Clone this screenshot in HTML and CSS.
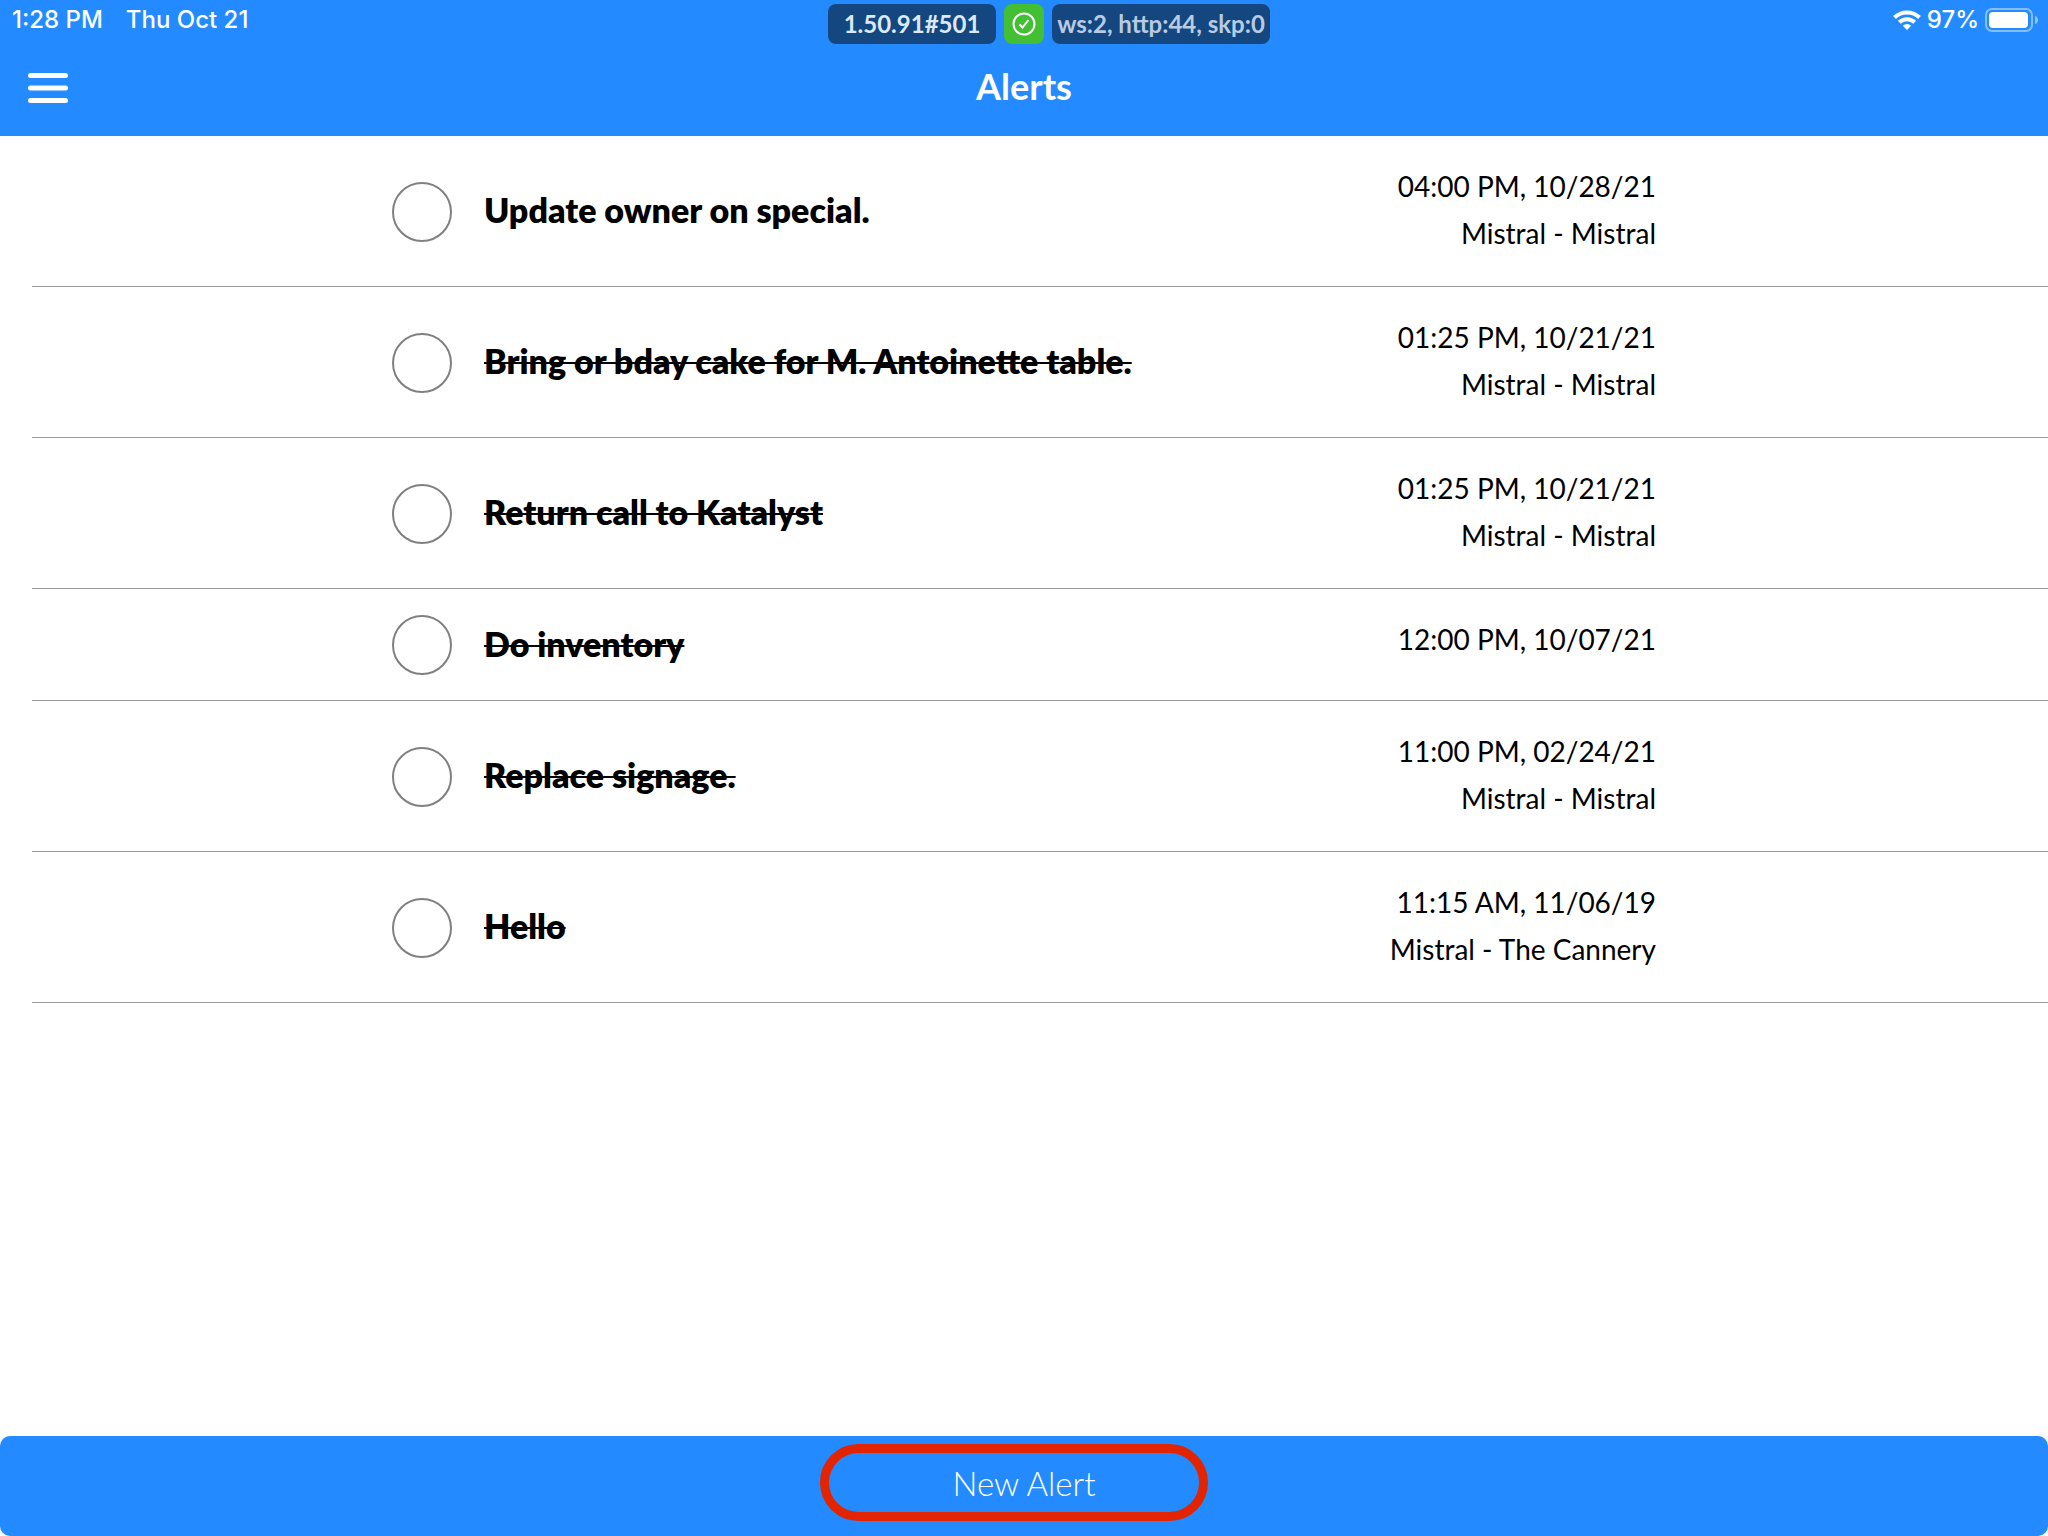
FILE: index.html
```
<!DOCTYPE html>
<html lang="en">
<head>
  <meta charset="UTF-8">
  <meta name="viewport" content="width=device-width, initial-scale=1">
  <title>Alerts</title>
  <link rel="stylesheet" href="styles.css">
</head>
<body>
  <header class="header">
    <div class="status-bar">
      <div class="status-left">
        <span>1:28 PM</span>
        <span>Thu Oct 21</span>
      </div>
      <div class="chips">
        <span class="chip">1.50.91#501</span>
        <span class="chip chip-ok">
          <svg width="24" height="24" viewBox="0 0 24 24" fill="none" stroke="#fff" stroke-width="2">
            <circle cx="12" cy="12" r="10.5"/>
            <path d="M7.5 12.5l3 3 6-7.5"/>
          </svg>
        </span>
        <span class="chip chip-net">ws:2, http:44, skp:0</span>
      </div>
      <div class="status-right">
        <svg width="28" height="22" viewBox="0 0 28 22" fill="none" stroke="#fff" stroke-width="4">
          <path d="M1.5 8.5a18 18 0 0 1 25 0"/>
          <path d="M6.3 13.3a11 11 0 0 1 15.4 0"/>
          <path d="M14 21l-4.2-4.3a6 6 0 0 1 8.4 0z" fill="#fff" stroke="none"/>
        </svg>
        <span>97%</span>
        <svg width="53" height="24" viewBox="0 0 53 24">
          <rect x="1" y="1" width="46" height="22" rx="6" fill="none" stroke="#fff" stroke-opacity=".45" stroke-width="2"/>
          <rect x="4" y="4" width="39" height="16" rx="4" fill="#fff"/>
          <path d="M50 8c4 1 4 7 0 8z" fill="#fff" fill-opacity=".5"/>
        </svg>
      </div>
    </div>
    <div class="nav-bar">
      <button class="menu" type="button" aria-label="Menu">
        <svg width="40" height="30" viewBox="0 0 40 30" stroke="#fff" stroke-width="5" stroke-linecap="round">
          <path d="M2.5 2.5h35M2.5 15h35M2.5 27.5h35"/>
        </svg>
      </button>
      <h1>Alerts</h1>
    </div>
  </header>

  <main>
    <ul class="alerts">
      <li>
        <div class="alert">
          <input type="checkbox" id="a1">
          <label for="a1">Update owner on special.</label>
          <div class="info"><div>04:00 PM, 10/28/21</div><div>Mistral - Mistral</div></div>
        </div>
      </li>
      <li>
        <div class="alert done">
          <input type="checkbox" id="a2">
          <label for="a2">Bring or bday cake for M. Antoinette table.</label>
          <div class="info"><div>01:25 PM, 10/21/21</div><div>Mistral - Mistral</div></div>
        </div>
      </li>
      <li>
        <div class="alert done">
          <input type="checkbox" id="a3">
          <label for="a3">Return call to Katalyst</label>
          <div class="info"><div>01:25 PM, 10/21/21</div><div>Mistral - Mistral</div></div>
        </div>
      </li>
      <li>
        <div class="alert done">
          <input type="checkbox" id="a4">
          <label for="a4">Do inventory</label>
          <div class="info"><div>12:00 PM, 10/07/21</div></div>
        </div>
      </li>
      <li>
        <div class="alert done">
          <input type="checkbox" id="a5">
          <label for="a5">Replace signage.</label>
          <div class="info"><div>11:00 PM, 02/24/21</div><div>Mistral - Mistral</div></div>
        </div>
      </li>
      <li>
        <div class="alert done">
          <input type="checkbox" id="a6">
          <label for="a6">Hello</label>
          <div class="info"><div>11:15 AM, 11/06/19</div><div>Mistral - The Cannery</div></div>
        </div>
      </li>
    </ul>
  </main>

  <button class="new-alert" type="button">New Alert</button>
</body>
</html>
```
FILE: styles.css
```
* {
  box-sizing: border-box;
}
body {
  margin: 0;
  min-height: 100vh;
  display: flex;
  flex-direction: column;
  background: #fff;
  color: #000;
  font-family: "Avenir Next", Lato, "Open Sans", sans-serif;
}
button {
  border: 0;
  padding: 0;
  background: none;
  color: inherit;
  font-family: inherit;
}
svg {
  display: block;
}

.header {
  background: #238bff;
  color: #fff;
}
.status-bar {
  display: grid;
  grid-template-columns: 1fr auto 1fr;
  height: 44px;
  padding: 0 10px 0 12px;
  font-family: Inter, sans-serif;
  font-size: 24px;
  font-weight: 500;
  line-height: 40px;
}
.status-left {
  display: flex;
  gap: 23px;
}
.status-right {
  display: flex;
  align-items: center;
  justify-content: flex-end;
  gap: 6px;
  height: 40px;
}
.chips {
  display: flex;
  gap: 8px;
  padding: 4px 0 0 48px;
  font-family: "Avenir Next", Lato, sans-serif;
  font-weight: 700;
}
.chip {
  display: flex;
  align-items: center;
  justify-content: center;
  width: 168px;
  height: 40px;
  border-radius: 8px;
  background: #14477f;
  color: #dce9f8;
  white-space: nowrap;
}
.chip-ok {
  width: 40px;
  background: #43bf33;
}
.chip-net {
  width: 218px;
  color: #b9cbe2;
}

.nav-bar {
  display: grid;
  grid-template-columns: 1fr auto 1fr;
  align-items: center;
  height: 92px;
  padding: 0 28px 4px;
}
.menu {
  justify-self: start;
}
.nav-bar h1 {
  margin: 0;
  padding-bottom: 4px;
  font-size: 36px;
  font-weight: 700;
}

main {
  flex: 1;
}
.alerts {
  list-style: none;
  margin: 0;
  padding: 0;
}
.alerts li {
  margin-left: 32px;
  padding: 26px 32px 25px 0;
  border-bottom: 1px solid #999;
}
.alert {
  display: flex;
  align-items: center;
  max-width: 1264px;
  margin: 0 auto;
}
.alert input {
  appearance: none;
  flex: none;
  width: 60px;
  height: 60px;
  margin: 0 32px 0 0;
  border: 2px solid #808080;
  border-radius: 50%;
}
.alert label {
  flex: 1;
  padding-bottom: 4px;
  font-size: 34px;
  font-weight: 800;
}
.done label {
  text-decoration: line-through;
  text-decoration-thickness: 2px;
}
.info {
  align-self: flex-start;
  padding: 1px 0 4px;
  font-size: 28px;
  line-height: 47px;
  text-align: right;
}

.new-alert {
  position: relative;
  height: 100px;
  padding-bottom: 6px;
  border-radius: 10px;
  background: #238bff;
  color: #fff;
  font-size: 33px;
  font-weight: 300;
}
/* highlight ring */
.new-alert::after {
  content: "";
  position: absolute;
  top: 8px;
  left: calc(50% - 204px);
  box-sizing: border-box;
  width: 388px;
  height: 77px;
  border: 9px solid #e22400;
  border-radius: 39px;
}
```
